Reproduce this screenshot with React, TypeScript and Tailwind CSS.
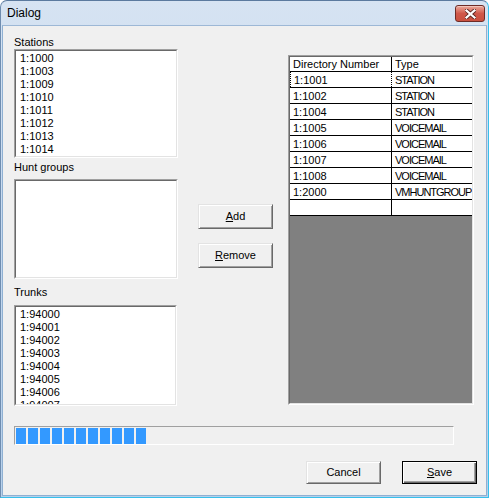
import React from 'react';

const stations = ['1:1000', '1:1003', '1:1009', '1:1010', '1:1011', '1:1012', '1:1013', '1:1014'];
const trunks = ['1:94000', '1:94001', '1:94002', '1:94003', '1:94004', '1:94005', '1:94006', '1:94007'];
const rows = [
    ['1:1001', 'STATION'],
    ['1:1002', 'STATION'],
    ['1:1004', 'STATION'],
    ['1:1005', 'VOICEMAIL'],
    ['1:1006', 'VOICEMAIL'],
    ['1:1007', 'VOICEMAIL'],
    ['1:1008', 'VOICEMAIL'],
    ['1:2000', 'VMHUNTGROUP'],
    ['', ''],
];

// classic 2px sunken edge
function Sunken({ className, inner, children }: { className: string; inner: string; children?: React.ReactNode }) {
    return (
        <div className={`border border-t-[#a0a0a0] border-l-[#a0a0a0] border-r-white border-b-white ${className}`}>
            <div className={`h-full border border-t-[#696969] border-l-[#696969] border-r-[#e3e3e3] border-b-[#e3e3e3] overflow-hidden ${inner}`}>
                {children}
            </div>
        </div>
    );
}

function ListBox({ items, className }: { items: string[]; className: string }) {
    return (
        <Sunken className={className} inner="bg-white pt-[1px] pl-[4px]">
            {items.map((item) => (
                <div key={item} className="h-[13px] leading-[13px] whitespace-nowrap">
                    {item}
                </div>
            ))}
        </Sunken>
    );
}

function WinButton({ children, isDefault, className }: { children: React.ReactNode; isDefault?: boolean; className: string }) {
    const edge = isDefault
        ? 'border border-black shadow-[inset_1px_1px_0_#ffffff,inset_-1px_-1px_0_#696969,inset_-2px_-2px_0_#a0a0a0]'
        : 'border border-t-[#e3e3e3] border-l-[#e3e3e3] border-r-[#696969] border-b-[#696969] shadow-[inset_1px_1px_0_#ffffff,inset_-1px_-1px_0_#a0a0a0]';
    return (
        <button type="button" className={`flex items-center justify-center bg-[#f0f0f0] text-black ${edge} ${className}`}>
            {children}
        </button>
    );
}

export default function App() {
    return (
        <div className="w-[489px] h-[498px] font-['Liberation_Sans',Arial,sans-serif] text-[11px] text-black">
            <div className="w-full h-full flex flex-col rounded-t-[7px] border border-t-[#5b7a9e] border-l-[#6f8db0] border-r-[#37c0ec] border-b-[#37c0ec] bg-linear-to-b from-[#d6e3f2] via-[#c4d8ee] to-[#b7d0ea] px-[1px] pb-[1px]">
                {/* Title bar */}
                <div className="h-[24px] flex items-start justify-between shrink-0">
                    <span className="ml-[5px] mt-[4px] text-[12px] leading-[16px] text-black">Dialog</span>
                    <div className="mt-[4px] mr-[2px] w-[30px] h-[17px] rounded-[3px] border border-[#6d2b26] bg-linear-to-b from-[#e9a99c] via-[#d0584a] to-[#c9503f] flex items-center justify-center shadow-[inset_0_1px_0_#f2c4b9]">
                        <svg width="11" height="10" viewBox="0 0 11 10">
                            <path d="M1.5 1.5 L9.5 8.5 M9.5 1.5 L1.5 8.5" stroke="#5a2520" strokeWidth="4" strokeLinecap="square" />
                            <path d="M1.5 1.5 L9.5 8.5 M9.5 1.5 L1.5 8.5" stroke="#ffffff" strokeWidth="2.2" strokeLinecap="square" />
                        </svg>
                    </div>
                </div>

                {/* Client area */}
                <div className="flex-1 flex flex-col bg-[#f0f0f0] border border-[#8fb0d2] border-t-[#9db8d6]">
                    <div className="flex items-start pt-[10px] pl-[11px]">
                        {/* Left column */}
                        <div className="w-[164px] flex flex-col">
                            <div className="h-[13px] leading-[13px]">Stations</div>
                            <ListBox items={stations} className="h-[109px]" />
                            <div className="mt-[3px] h-[18px] leading-[13px]">Hunt groups</div>
                            <Sunken className="h-[100px]" inner="bg-white" />
                            <div className="mt-[7px] h-[19px] leading-[13px]">Trunks</div>
                            <ListBox items={trunks} className="w-[163px] h-[101px]" />
                        </div>

                        {/* Middle buttons */}
                        <div className="ml-[20px] mt-[168px] w-[75px] flex flex-col gap-[14px]">
                            <WinButton className="h-[25px] w-[75px]">
                                <span><span className="underline">A</span>dd</span>
                            </WinButton>
                            <WinButton className="h-[25px] w-[75px]">
                                <span><span className="underline">R</span>emove</span>
                            </WinButton>
                        </div>

                        {/* Grid */}
                        <Sunken className="ml-[15px] mt-[19px] w-[186px] h-[350px]" inner="bg-[#808080]">
                            <div className="flex bg-white border-b border-black h-[15px]">
                                <div className="w-[102px] border-r border-black pl-[3px] leading-[14px] whitespace-nowrap">Directory Number</div>
                                <div className="flex-1 pl-[3px] leading-[14px]">Type</div>
                            </div>
                            {rows.map(([num, type], i) => (
                                <div key={i} className="flex bg-white border-b border-black h-[16px]">
                                    <div className={`w-[102px] border-r border-black pl-[3px] pt-[2px] leading-[13px] whitespace-nowrap ${i === 0 ? 'border-l border-l-black border-dotted' : ''}`}>
                                        {num}
                                    </div>
                                    <div className="flex-1 pl-[3px] pt-[2px] leading-[13px] tracking-[-1px] whitespace-nowrap overflow-hidden">{type}</div>
                                </div>
                            ))}
                        </Sunken>
                    </div>

                    {/* Progress bar */}
                    <div className="mt-[20px] ml-[11px] w-[440px] h-[19px] border border-t-[#a0a0a0] border-l-[#a0a0a0] border-r-white border-b-white pt-[1px] pl-[1px] flex gap-[2px]">
                        {Array.from({ length: 11 }).map((_, i) => (
                            <div key={i} className="w-[10px] h-[16px] bg-[#3399ff]" />
                        ))}
                    </div>

                    {/* Dialog buttons */}
                    <div className="mt-[16px] pr-[9px] flex justify-end gap-[21px]">
                        <WinButton className="w-[75px] h-[23px]">Cancel</WinButton>
                        <WinButton isDefault className="w-[75px] h-[23px]">
                            <span><span className="underline">S</span>ave</span>
                        </WinButton>
                    </div>
                </div>
            </div>
        </div>
    );
}
